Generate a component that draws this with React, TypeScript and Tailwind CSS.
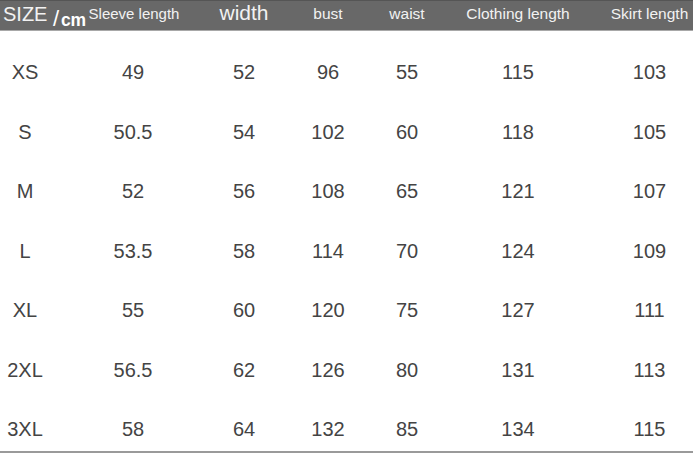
import React from "react";

const cols = ["w-[50px]", "w-[166px]", "w-[56px]", "w-[112px]", "w-[46px]", "w-[176px]", "w-[87px]"];

const rows = [
  ["XS", "49", "52", "96", "55", "115", "103"],
  ["S", "50.5", "54", "102", "60", "118", "105"],
  ["M", "52", "56", "108", "65", "121", "107"],
  ["L", "53.5", "58", "114", "70", "124", "109"],
  ["XL", "55", "60", "120", "75", "127", "111"],
  ["2XL", "56.5", "62", "126", "80", "131", "113"],
  ["3XL", "58", "64", "132", "85", "134", "115"],
];

export default function App() {
  return (
    <div
      className="w-[693px] h-[455px] bg-white overflow-hidden"
      style={{ fontFamily: '"Liberation Sans", Arial, sans-serif' }}
    >
      <div className="relative h-[31px] bg-[#686868] border-t border-t-[#555] border-b border-b-[#a8a8a8] flex text-[#f2f2f2]">
        <div className="relative w-[50px] shrink-0">
          <span className="absolute left-[3px] top-[1px] text-[20px] leading-[24px]">SIZE</span>
          <span className="absolute left-[53px] top-[6px] text-[22px] leading-[24px] text-white">/</span>
          <span className="absolute left-[61px] top-[8px] text-[17.5px] leading-[22px] text-white font-bold tracking-[-0.3px]">cm</span>
        </div>
        <div className="w-[166px] shrink-0 flex justify-center">
          <span className="pl-[2px] text-[15px] leading-[18px] mt-[4px]">Sleeve length</span>
        </div>
        <div className="w-[56px] shrink-0 flex justify-center">
          <span className="text-[21px] leading-[24px] mt-[0px]">width</span>
        </div>
        <div className="w-[112px] shrink-0 flex justify-center">
          <span className="text-[15.5px] leading-[18px] mt-[4px]">bust</span>
        </div>
        <div className="w-[46px] shrink-0 flex justify-center">
          <span className="text-[15.5px] leading-[18px] mt-[4px]">waist</span>
        </div>
        <div className="w-[176px] shrink-0 flex justify-center">
          <span className="text-[15.5px] leading-[18px] mt-[4px]">Clothing length</span>
        </div>
        <div className="w-[87px] shrink-0 flex justify-center">
          <span className="text-[15.5px] leading-[18px] mt-[4px] whitespace-nowrap">Skirt length</span>
        </div>
      </div>
      <div>
        {rows.map((r, i) => (
          <div key={i} className="h-[59.5px] flex items-start text-[#444] text-[20px] leading-[24px]">
            {r.map((c, j) => (
              <div key={j} className={`${cols[j]} shrink-0 text-center pt-[29px]`}>
                {c}
              </div>
            ))}
          </div>
        ))}
      </div>
      <div className="mt-[3px] h-[2px] bg-[#9a9a9a]" />
    </div>
  );
}
